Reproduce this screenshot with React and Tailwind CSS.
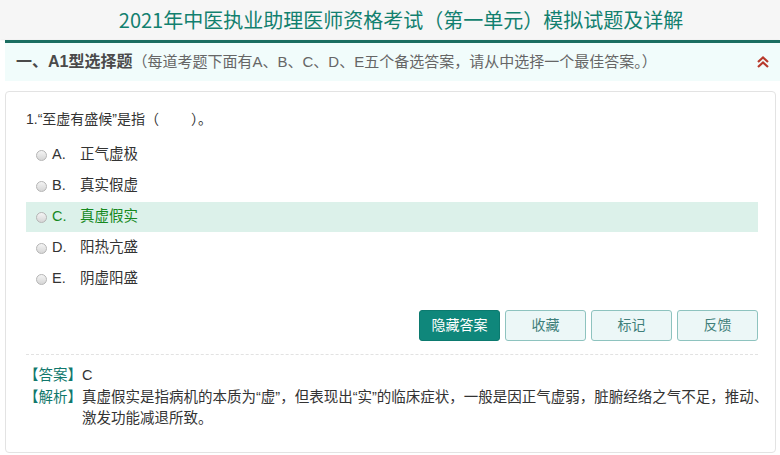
const FONT = { fontFamily: '"Liberation Sans", "Noto Sans CJK SC", sans-serif' };

const options = [
  { k: 'A', t: '正气虚极' },
  { k: 'B', t: '真实假虚' },
  { k: 'C', t: '真虚假实', right: true },
  { k: 'D', t: '阳热亢盛' },
  { k: 'E', t: '阴虚阳盛' },
];

function Radio() {
  return (
    <span className="inline-block w-[11px] h-[11px] rounded-full border border-[#b5b5b5] bg-gradient-to-b from-[#f4f4f4] to-[#d6d6d6]" />
  );
}

export default function App() {
  return (
    <div className="w-[780px] h-[455px] bg-white overflow-hidden" style={FONT}>
      <div className="h-[39px] bg-[#f6f6f6] flex items-center justify-center shadow-[0_1px_2px_rgba(0,0,0,0.08)]">
        <h1 className="text-[20px] leading-none text-[#12806f] pl-[22px]" style={{ fontFamily: '"Noto Sans CJK SC", sans-serif' }}>
          2021年中医执业助理医师资格考试（第一单元）模拟试题及详解
        </h1>
      </div>

      <div className="ml-[5px] mt-[1px] border-t-[3px] border-[#1b6e61] bg-[#f1fcfb] h-[41px] flex items-center pl-[11px] pr-[10px]">
        <span className="text-[16px] font-bold text-[#4a4a4a]">一、A1型选择题</span>
        <span className="text-[15px] text-[#666]">（每道考题下面有A、B、C、D、E五个备选答案，请从中选择一个最佳答案。）</span>
        <svg className="ml-auto" width="14" height="14" viewBox="0 0 14 14">
          <path d="M2 7 L7 2.5 L12 7" fill="none" stroke="#b8392b" strokeWidth="2.2" />
          <path d="M2 12 L7 7.5 L12 12" fill="none" stroke="#b8392b" strokeWidth="2.2" />
        </svg>
      </div>

      <div className="ml-[5px] mr-[4px] mt-[10px] h-[362px] border border-[#e3e3e3] rounded-[4px] pl-[20px] pr-[17px] pt-[16px]">
        <p className="text-[14px] text-[#333] leading-[22px]">1.“至虚有盛候”是指（　　 ）。</p>
        <div className="mt-[10px] flex flex-col gap-[1px]">
          {options.map((o) => (
            <div
              key={o.k}
              className={`h-[30px] flex items-center pl-[10px] text-[14.5px] ${o.right ? 'bg-[#dcf1ea] text-[#17891f]' : 'text-[#333]'}`}
            >
              <Radio />
              <span className="ml-[5px] w-[28px]">{o.k}.</span>
              <span>{o.t}</span>
            </div>
          ))}
        </div>
        <div className="mt-[16px] flex justify-end gap-[5px] pb-[13px] border-b border-dashed border-[#e2e2e2]">
          <button className="w-[81px] h-[31px] rounded-[3px] bg-[#0f877b] text-white text-[14px] border border-[#0c7a6f]">隐藏答案</button>
          <button className="w-[81px] h-[31px] rounded-[3px] bg-[#ecf7f7] text-[#3f7f7a] text-[14px] border border-[#8ec3bf]">收藏</button>
          <button className="w-[81px] h-[31px] rounded-[3px] bg-[#ecf7f7] text-[#3f7f7a] text-[14px] border border-[#8ec3bf]">标记</button>
          <button className="w-[81px] h-[31px] rounded-[3px] bg-[#ecf7f7] text-[#3f7f7a] text-[14px] border border-[#8ec3bf]">反馈</button>
        </div>
        <div className="mt-[10px] text-[14.5px] leading-[21.5px] text-[#333] -mr-[16px]">
          <div className="flex">
            <span className="text-[#11786c] shrink-0 -ml-[2px]">【答案】</span>
            <span>C</span>
          </div>
          <div className="flex">
            <span className="text-[#11786c] shrink-0 -ml-[2px]">【解析】</span>
            <span>真虚假实是指病机的本质为“虚”，但表现出“实”的临床症状，一般是因正气虚弱，脏腑经络之气不足，推动、激发功能减退所致。</span>
          </div>
        </div>
      </div>
    </div>
  );
}
